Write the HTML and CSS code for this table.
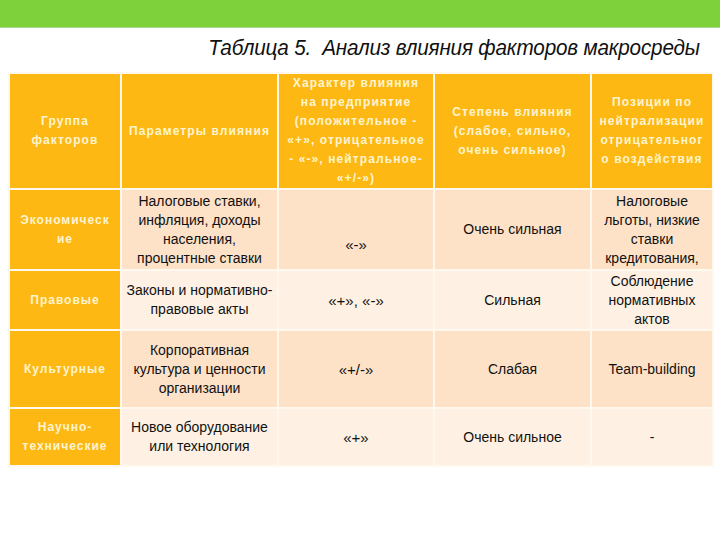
FILE: index.html
```html
<!DOCTYPE html>
<html lang="ru">
<head>
<meta charset="utf-8">
<link rel="stylesheet" href="styles.css">
</head>
<body>
<div class="topbar"></div>
<h1 class="title"><span class="title-text">Таблица 5.&nbsp; Анализ влияния факторов макросреды</span></h1>
<table class="tbl">
  <colgroup>
    <col class="c1"><col class="c2"><col class="c3"><col class="c4"><col class="c5">
  </colgroup>
  <thead>
    <tr class="rh">
      <th>Группа<br>факторов</th>
      <th>Параметры влияния</th>
      <th>Характер влияния<br>на предприятие<br>(положительное -<br>«+», отрицательное<br>- «-», нейтральное-<br>«+/-»)</th>
      <th>Степень влияния<br>(слабое, сильно,<br>очень сильное)</th>
      <th>Позиции по<br>нейтрализации<br>отрицательног<br>о воздействия</th>
    </tr>
  </thead>
  <tbody>
    <tr class="r1 dark">
      <td class="grp">Экономическ<br>ие</td>
      <td>Налоговые ставки,<br>инфляция, доходы<br>населения,<br>процентные ставки</td>
      <td class="sign low">«-»</td>
      <td>Очень сильная</td>
      <td>Налоговые<br>льготы, низкие<br>ставки<br>кредитования,</td>
    </tr>
    <tr class="r2 light">
      <td class="grp">Правовые</td>
      <td>Законы и нормативно-<br>правовые акты</td>
      <td class="sign">«+», «-»</td>
      <td>Сильная</td>
      <td>Соблюдение<br>нормативных<br>актов</td>
    </tr>
    <tr class="r3 dark">
      <td class="grp">Культурные</td>
      <td>Корпоративная<br>культура и ценности<br>организации</td>
      <td class="sign">«+/-»</td>
      <td>Слабая</td>
      <td>Team-building</td>
    </tr>
    <tr class="r4 light">
      <td class="grp">Научно-<br>технические</td>
      <td>Новое оборудование<br>или технология</td>
      <td class="sign">«+»</td>
      <td>Очень сильное</td>
      <td>-</td>
    </tr>
  </tbody>
</table>
</body>
</html>
```
FILE: styles.css
```css
html, body {
  margin: 0;
  padding: 0;
  background: #ffffff;
}
body {
  font-family: "Liberation Sans", Arial, sans-serif;
  width: 720px;
  height: 540px;
  overflow: hidden;
}
.topbar {
  height: 27px;
  background: #7ed13b;
  border-bottom: 1px solid #a6d98a;
}
.title {
  margin: 0;
  padding: 7px 20px 0 0;
  height: 36px;
  box-sizing: border-box;
  text-align: right;
  font-family: "Liberation Sans", Arial, sans-serif;
  font-style: italic;
  font-weight: normal;
  font-size: 22px;
  line-height: 25px;
  color: #111;
}
.title-text {
  display: inline-block;
  transform: scaleX(0.94);
  transform-origin: right center;
  letter-spacing: -0.2px;
}
.tbl {
  margin: 8px 0 0 8px;
  width: 704px;
  border-collapse: collapse;
  table-layout: fixed;
}
.c1 { width: 112px; }
.c2 { width: 157px; }
.c3 { width: 156px; }
.c4 { width: 157px; }
.c5 { width: 122px; }
.tbl th, .tbl td {
  border: 2px solid #fff8ee;
  padding: 0;
  text-align: center;
  vertical-align: middle;
  overflow: hidden;
  white-space: nowrap;
}
.tbl th {
  background: #fdb813;
  color: #fff4d0;
  font-weight: bold;
  font-size: 12px;
  letter-spacing: 1.1px;
  line-height: 19px;
}
.rh { height: 114px; }
.tbl td {
  font-size: 14px;
  line-height: 19px;
  color: #111;
}
.dark td { background: #fde2c8; }
.light td { background: #fef1e3; }
.tbl td.grp {
  background: #fdb813;
  color: #fff4d0;
  font-weight: bold;
  font-size: 12px;
  letter-spacing: 1px;
}
.tbl td.sign { font-size: 15px; }
.tbl td.low { padding-top: 30px; }
.r1 { height: 81px; }
.r2 { height: 60px; }
.r3 { height: 78px; }
.r4 { height: 58px; }
```
